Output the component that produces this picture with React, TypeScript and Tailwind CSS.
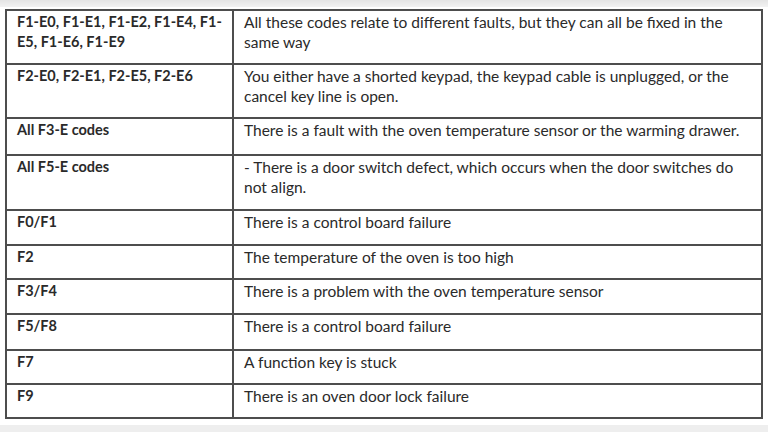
import React from "react";

type Row = { code: React.ReactNode; desc: string; h: number };

const rows: Row[] = [
  {
    code: (
      <>
        <span className="whitespace-nowrap">F1-E0, F1-E1, F1-E2, F1-E4, F1-</span>
        <br />
        E5, F1-E6, F1-E9
      </>
    ),
    desc: "All these codes relate to different faults, but they can all be fixed in the same way",
    h: 54,
  },
  {
    code: "F2-E0, F2-E1, F2-E5, F2-E6",
    desc: "You either have a shorted keypad, the keypad cable is unplugged, or the cancel key line is open.",
    h: 54,
  },
  {
    code: "All F3-E codes",
    desc: "There is a fault with the oven temperature sensor or the warming drawer.",
    h: 37,
  },
  {
    code: "All F5-E codes",
    desc: "- There is a door switch defect, which occurs when the door switches do not align.",
    h: 55,
  },
  { code: "F0/F1", desc: "There is a control board failure", h: 35 },
  { code: "F2", desc: "The temperature of the oven is too high", h: 34 },
  { code: "F3/F4", desc: "There is a problem with the oven temperature sensor", h: 35 },
  { code: "F5/F8", desc: "There is a control board failure", h: 36 },
  { code: "F7", desc: "A function key is stuck", h: 34 },
  { code: "F9", desc: "There is an oven door lock failure", h: 34 },
];

export default function App() {
  return (
    <div
      className="w-[768px] h-[432px] bg-white flex flex-col overflow-hidden text-[#2a2a2a]"
      style={{ fontFamily: "Lato, 'Open Sans', sans-serif" }}
    >
      <div className="h-[7px] bg-gradient-to-b from-[#e4e4e4] to-[#f2f2f2]" />
      <div className="pt-[2px] pl-[5px]">
        <table className="w-[758px] border-collapse table-fixed border-2 border-[#4d4d4d]">
          <colgroup>
            <col className="w-[227px]" />
            <col />
          </colgroup>
          <tbody>
            {rows.map((r, i) => (
              <tr key={i} style={{ height: r.h }}>
                <td className="border-2 border-[#4d4d4d] align-top pl-[10px] pr-0 pt-[1px] text-[14.5px] leading-[20px] font-bold">
                  {r.code}
                </td>
                <td className="border-2 border-[#4d4d4d] align-top pl-[10px] pr-1 pt-[1px] text-[15.5px] leading-[20px]">
                  {r.desc}
                </td>
              </tr>
            ))}
          </tbody>
        </table>
      </div>
      <div className="mt-[6px] flex-1 bg-[#eeeeee]" />
    </div>
  );
}
